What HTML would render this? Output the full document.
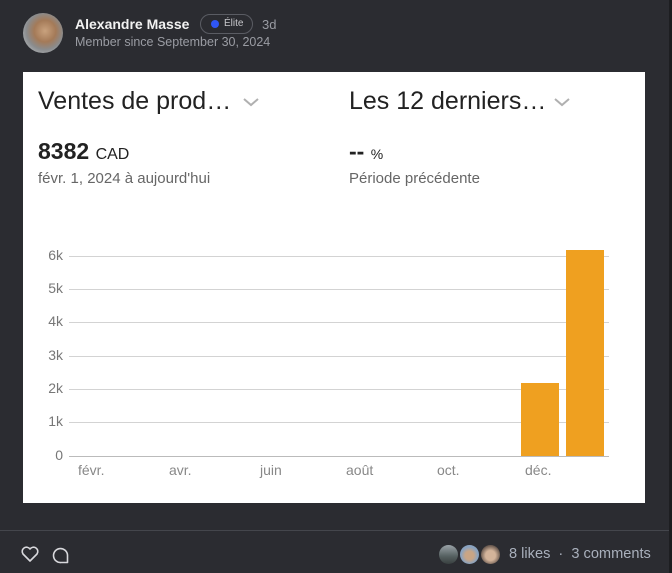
<!DOCTYPE html>
<html><head><meta charset="utf-8"><style>
*{margin:0;padding:0;box-sizing:border-box}
body{width:672px;height:573px;background:#2b2c31;font-family:"Liberation Sans",sans-serif;position:relative;overflow:hidden}
.a{position:absolute}
.panel{left:23px;top:72px;width:622px;height:431px;background:#fff}
.t{color:#222;white-space:nowrap}
.yl{position:absolute;width:30px;text-align:right;left:10px;font-size:14px;color:#777}
.g{position:absolute;left:46px;width:540px;height:1px;background:#d3d3d3}
.xl{position:absolute;top:390px;font-size:14px;color:#888}
</style></head><body>
<div class="a" style="right:0;top:0;width:3px;height:573px;background:#1d1e21"></div>
<div class="a" style="left:23px;top:13px;width:40px;height:40px;border-radius:50%;background:radial-gradient(circle at 55% 45%,#c9a27e 0,#a47a58 35%,#8a8c8e 60%,#cfd3d6 100%)"></div>
<div class="a t" style="left:75px;top:16px;font-size:14px;font-weight:bold;color:#f2f2f2">Alexandre Masse</div>
<div class="a" style="left:200px;top:14px;width:53px;height:20px;border:1px solid #5a5c63;border-radius:10px"></div>
<div class="a" style="left:211px;top:20px;width:8px;height:8px;border-radius:50%;background:#2f56f5"></div>
<div class="a t" style="left:224px;top:18px;font-size:10px;color:#c8c8cc">Élite</div>
<div class="a t" style="left:262px;top:17px;font-size:13px;color:#9a9ca3">3d</div>
<div class="a t" style="left:75px;top:35px;font-size:12.5px;color:#9a9ca3">Member since September 30, 2024</div>

<div class="a panel">
 <div class="a t" style="left:15px;top:15px;font-size:25px;color:#222">Ventes de prod…</div>
 <svg class="a" style="left:219px;top:25px" width="18" height="10"><path d="M2 2l7 6 7-6" stroke="#b0b0b0" stroke-width="2" fill="none"/></svg>
 <div class="a t" style="left:326px;top:15px;font-size:25px;color:#222">Les 12 derniers…</div>
 <svg class="a" style="left:530px;top:25px" width="18" height="10"><path d="M2 2l7 6 7-6" stroke="#b0b0b0" stroke-width="2" fill="none"/></svg>
 <div class="a t" style="left:15px;top:66px;font-size:23px;font-weight:bold;color:#222">8382 <span style="font-size:16px;font-weight:normal">CAD</span></div>
 <div class="a t" style="left:15px;top:98px;font-size:15px;color:#666">févr. 1, 2024 à aujourd'hui</div>
 <div class="a t" style="left:326px;top:66px;font-size:23px;font-weight:900;color:#222">--&nbsp;<span style="font-size:14px;font-weight:normal">%</span></div>
 <div class="a t" style="left:326px;top:98px;font-size:15px;color:#666">Période précédente</div>

 <div class="yl" style="top:175px">6k</div><div class="g" style="top:184px"></div>
 <div class="yl" style="top:208px">5k</div><div class="g" style="top:217px"></div>
 <div class="yl" style="top:241px">4k</div><div class="g" style="top:250px"></div>
 <div class="yl" style="top:275px">3k</div><div class="g" style="top:284px"></div>
 <div class="yl" style="top:308px">2k</div><div class="g" style="top:317px"></div>
 <div class="yl" style="top:341px">1k</div><div class="g" style="top:350px"></div>
 <div class="yl" style="top:375px">0</div><div class="g" style="top:384px;background:#bbb"></div>
 <div class="a" style="left:498px;top:311px;width:38px;height:73px;background:#efa020"></div>
 <div class="a" style="left:543px;top:178px;width:38px;height:206px;background:#efa020"></div>
 <div class="xl" style="left:55px">févr.</div>
 <div class="xl" style="left:146px">avr.</div>
 <div class="xl" style="left:237px">juin</div>
 <div class="xl" style="left:323px">août</div>
 <div class="xl" style="left:414px">oct.</div>
 <div class="xl" style="left:502px">déc.</div>
</div>

<div class="a" style="left:0;top:530px;width:669px;height:1px;background:#44464c"></div>
<svg class="a" style="left:20px;top:545px" width="20" height="18"><path d="M10 16L3 9a4 4 0 0 1 7-5 4 4 0 0 1 7 5z" stroke="#d8d8dc" stroke-width="1.6" fill="none" stroke-linejoin="round"/></svg>
<svg class="a" style="left:51px;top:545px" width="20" height="20"><path d="M16.5 17.5V10A7 7 0 1 0 10 17.5Z" stroke="#d8d8dc" stroke-width="1.6" fill="none" stroke-linejoin="round"/></svg>
<div class="a" style="left:439px;top:545px;width:19px;height:19px;border-radius:50%;background:linear-gradient(#9aa3a8,#556060 60%,#394040)"></div>
<div class="a" style="left:460px;top:545px;width:19px;height:19px;border-radius:50%;background:radial-gradient(circle at 50% 55%,#c9a585 30%,#8aa3c0 60%)"></div>
<div class="a" style="left:481px;top:545px;width:19px;height:19px;border-radius:50%;background:radial-gradient(circle at 50% 55%,#d4b49a 35%,#6a5a50 70%)"></div>
<div class="a t" style="left:509px;top:546px;font-size:14.6px;color:#a9b0bc">8 likes <span style="margin:0 4px">·</span> 3 comments</div>
</body></html>
